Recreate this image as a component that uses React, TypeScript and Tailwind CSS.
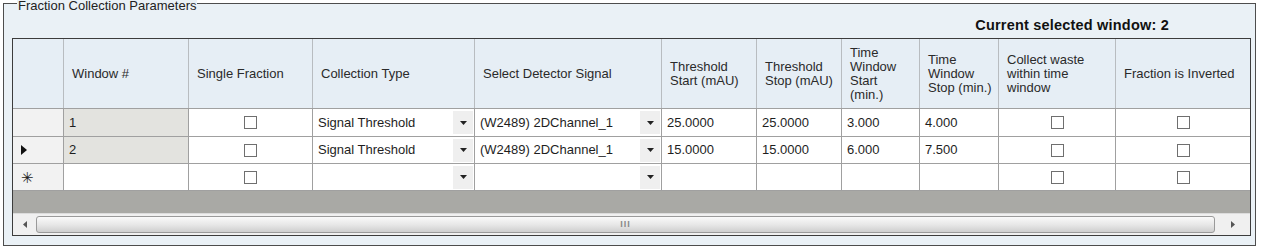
import React from "react";

const cols =
  "grid grid-cols-[50px_125px_124px_162px_187px_95px_85px_78px_79px_117px_1fr]";

const headers = [
  "",
  "Window #",
  "Single Fraction",
  "Collection Type",
  "Select Detector Signal",
  "Threshold\nStart (mAU)",
  "Threshold\nStop (mAU)",
  "Time\nWindow\nStart\n(min.)",
  "Time\nWindow\nStop (min.)",
  "Collect waste\nwithin time\nwindow",
  "Fraction is Inverted",
];

type Row = {
  marker: "" | "current" | "new";
  win: string;
  type: string;
  signal: string;
  tStart: string;
  tStop: string;
  wStart: string;
  wStop: string;
};

const rows: Row[] = [
  { marker: "", win: "1", type: "Signal Threshold", signal: "(W2489) 2DChannel_1", tStart: "25.0000", tStop: "25.0000", wStart: "3.000", wStop: "4.000" },
  { marker: "current", win: "2", type: "Signal Threshold", signal: "(W2489) 2DChannel_1", tStart: "15.0000", tStop: "15.0000", wStart: "6.000", wStop: "7.500" },
  { marker: "new", win: "", type: "", signal: "", tStart: "", tStop: "", wStart: "", wStop: "" },
];

function Check() {
  return (
    <div className="flex h-full items-center justify-center">
      <div className="h-[13px] w-[13px] border border-[#6f6f6f] bg-white" />
    </div>
  );
}

function Combo({ value }: { value: string }) {
  return (
    <div className="flex h-full items-center">
      <span className="flex-1 truncate pl-[5px]">{value}</span>
      <span className="mr-[1px] flex h-[23px] w-[20px] items-center justify-center bg-[#efefef]">
        <svg width="7" height="4" viewBox="0 0 7 4">
          <path d="M0 0h7L3.5 4z" fill="#222" />
        </svg>
      </span>
    </div>
  );
}

function Text({ value }: { value: string }) {
  return <div className="flex h-full items-center pl-[5px]">{value}</div>;
}

export default function App() {
  return (
    <div className="h-[251px] w-[1263px] bg-white pl-[3px] pt-[3px] font-['Liberation_Sans',Arial,sans-serif] text-[13px] text-[#1e1e1e]">
      <div className="relative flex h-[243px] w-[1253px] flex-col border border-[#4d4d4d] bg-[#eaf1f6] pl-[8px] pr-[4px]">
        <span className="absolute left-[13px] top-[-6px] bg-[#eaf1f6] px-[1px] text-[13px] leading-[15px] text-[#222]">
          Fraction Collection Parameters
        </span>

        <div className="flex h-[34px] items-end justify-end pb-[1px] pr-[82px] text-[14.5px] font-bold tracking-[0.2px] text-[#111]">
          Current selected window: 2
        </div>

        <div className="mb-[9px] flex flex-1 flex-col border border-[#3c3c3c] bg-[#a9a9a5]">
          <div className={`${cols} h-[70px] border-b border-[#a0a0a0] bg-[#e6eef5]`}>
            {headers.map((h, i) => (
              <div
                key={i}
                className={`flex items-center whitespace-pre-line pl-[8px] leading-[14px] text-[#2a2a2a] ${
                  i > 0 ? "border-l border-[#b8bcc0]" : ""
                }`}
              >
                {h}
              </div>
            ))}
          </div>

          {rows.map((r, i) => (
            <div
              key={i}
              className={`${cols} ${i === 0 ? "h-[28px]" : "h-[27px]"} border-b border-[#a0a0a0] bg-white`}
            >
              <div className="flex items-center bg-[#f2f2f2] pl-[8px]">
                {r.marker === "current" && (
                  <svg width="6" height="10" viewBox="0 0 6 10">
                    <path d="M0 0l6 5-6 5z" fill="#111" />
                  </svg>
                )}
                {r.marker === "new" && (
                  <span className="text-[15px] leading-none text-[#222]">✳</span>
                )}
              </div>
              <div
                className={`border-l border-[#a0a0a0] ${
                  r.marker === "new" ? "bg-white" : "bg-[#e3e3df]"
                }`}
              >
                <Text value={r.win} />
              </div>
              <div className="border-l border-[#a0a0a0]">
                <Check />
              </div>
              <div className="border-l border-[#a0a0a0]">
                <Combo value={r.type} />
              </div>
              <div className="border-l border-[#a0a0a0]">
                <Combo value={r.signal} />
              </div>
              <div className="border-l border-[#a0a0a0]">
                <Text value={r.tStart} />
              </div>
              <div className="border-l border-[#a0a0a0]">
                <Text value={r.tStop} />
              </div>
              <div className="border-l border-[#a0a0a0]">
                <Text value={r.wStart} />
              </div>
              <div className="border-l border-[#a0a0a0]">
                <Text value={r.wStop} />
              </div>
              <div className="border-l border-[#a0a0a0]">
                <Check />
              </div>
              <div className="border-l border-[#a0a0a0]">
                <Check />
              </div>
            </div>
          ))}

          <div className="flex-1" />

          <div className="flex h-[22px] items-stretch border-t border-[#dcdcdc] bg-[#f0f0f0]">
            <div className="flex w-[23px] items-center justify-center">
              <svg width="4" height="7" viewBox="0 0 4 7">
                <path d="M4 0v7L0 3.5z" fill="#555" />
              </svg>
            </div>
            <div className="my-[2px] flex flex-1 items-center justify-center rounded-[3px] border border-[#9a9a9a] bg-gradient-to-b from-[#fafafa] via-[#e8e8e8] to-[#cfcfcf]">
              <span className="text-[9px] font-bold leading-none tracking-[1px] text-[#888]">III</span>
            </div>
            <div className="flex w-[35px] items-center justify-center">
              <svg width="4" height="7" viewBox="0 0 4 7">
                <path d="M0 0v7l4-3.5z" fill="#555" />
              </svg>
            </div>
          </div>
        </div>
      </div>
    </div>
  );
}
